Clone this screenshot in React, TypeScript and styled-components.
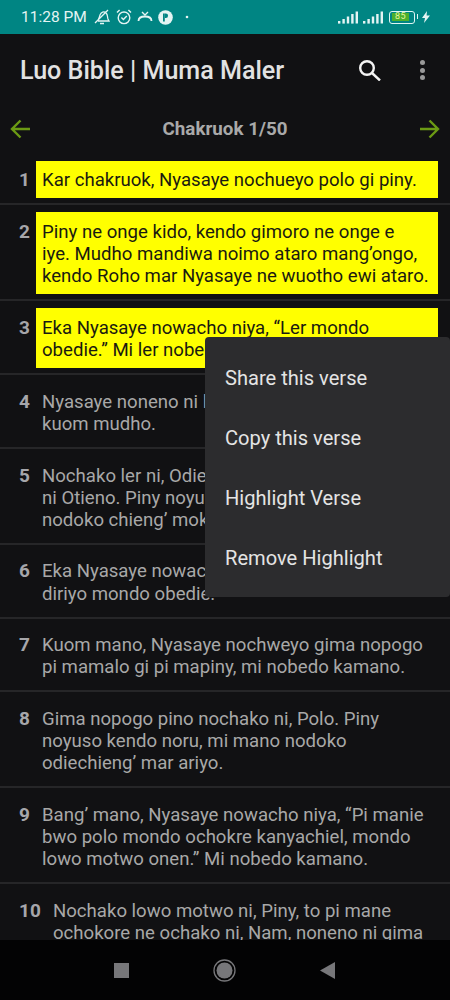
import React from "react";
import styled, { createGlobalStyle } from "styled-components";

const GlobalStyle = createGlobalStyle`
  html, body {
    margin: 0;
    padding: 0;
    background: #111113;
  }
`;

const Screen = styled.div`
  position: relative;
  width: 450px;
  height: 1000px;
  display: flex;
  flex-direction: column;
  overflow: hidden;
  background: #111113;
  font-family: Roboto, "Noto Sans", sans-serif;
`;

const StatusBar = styled.div`
  height: 34px;
  flex: none;
  display: flex;
  align-items: center;
  justify-content: space-between;
  padding: 0 20px 0 21px;
  background: #008583;
  color: #e4f4f3;
`;

const StatusGroup = styled.div<{ $gap: number }>`
  display: flex;
  align-items: center;
  gap: ${(p) => p.$gap}px;
`;

const Clock = styled.span`
  font-size: 15.5px;
  margin-right: 1px;
`;

const Battery = styled.div`
  position: relative;
  width: 26px;
  height: 13px;
  box-sizing: border-box;
  border: 1.5px solid #dff5f3;
  border-radius: 3px;
  padding: 1.5px;
  display: flex;
  margin: 0 3px 0 1px;
  &::after {
    content: "";
    position: absolute;
    right: -4px;
    top: 2.5px;
    width: 1.5px;
    height: 5px;
    background: #dff5f3;
  }
`;

const BatteryFill = styled.div`
  width: 85%;
  background: #4caf2c;
  color: #e6f7a0;
  font-size: 9px;
  line-height: 7px;
  text-align: center;
  letter-spacing: 0.4px;
`;

const Toolbar = styled.div`
  height: 72px;
  flex: none;
  display: flex;
  align-items: center;
  gap: 14px;
  padding: 0 4px 0 20px;
`;

const Title = styled.h1`
  flex: 1;
  margin: 0;
  font-size: 25.1px;
  font-weight: 500;
  color: #e2e2e2;
`;

const ToolbarAction = styled.div<{ $width: number }>`
  width: ${(p) => p.$width}px;
  display: flex;
  align-items: center;
  justify-content: center;
  color: #f4f4f4;
`;

const Dots = styled.div`
  display: flex;
  flex-direction: column;
  gap: 2.5px;
  & > span {
    width: 5px;
    height: 5px;
    border-radius: 50%;
    background: #999999;
  }
`;

const ChapterNav = styled.div`
  height: 46px;
  flex: none;
  display: flex;
  align-items: center;
  justify-content: space-between;
  padding: 0 10px;
`;

const ChapterLabel = styled.span`
  font-size: 18.8px;
  font-weight: 700;
  color: #a9a9a9;
`;

const VerseList = styled.div`
  flex: 1;
  min-height: 0;
  overflow: hidden;
  padding-top: 8.7px;
`;

const VerseRow = styled.div`
  display: flex;
  align-items: flex-start;
  margin-right: 12px;
  padding-bottom: 7px;
  margin-bottom: 7px;
  position: relative;
  &::after {
    content: "";
    position: absolute;
    left: 0;
    right: -12px;
    bottom: 0;
    height: 2px;
    background: #262628;
  }
`;

const VerseNumber = styled.span<{ $wide?: boolean }>`
  flex: none;
  box-sizing: border-box;
  width: ${(p) => (p.$wide ? 47 : 36)}px;
  padding: 8.7px 0 0 19px;
  font-size: 19px;
  line-height: 22.2px;
  font-weight: 700;
  color: #a6a6aa;
`;

const VerseText = styled.div<{ $marked?: boolean }>`
  flex: 1;
  min-width: 0;
  padding: 8.7px 6px 6.7px;
  font-size: 18.6px;
  line-height: 22.2px;
  white-space: pre-line;
  background: ${(p) => (p.$marked ? "#ffff00" : "transparent")};
  color: ${(p) => (p.$marked ? "#1a1a10" : "#a8a8a8")};
`;

const Menu = styled.div`
  position: absolute;
  left: 205px;
  top: 337px;
  width: 245px;
  padding: 10px 0;
  background: #2c2c2e;
  border-radius: 4px;
`;

const MenuItem = styled.div`
  height: 60px;
  box-sizing: border-box;
  display: flex;
  align-items: center;
  padding: 1px 0 0 20px;
  font-size: 20.1px;
  color: #e4e4e4;
`;

const NavBar = styled.div`
  height: 60px;
  flex: none;
  display: flex;
  align-items: center;
  justify-content: center;
  gap: 84px;
  padding-right: 2px;
  background: #030304;
`;

const NavSquare = styled.div`
  width: 15px;
  height: 15px;
  background: #77777a;
`;

const verses = [
  { n: 1, marked: true, text: "Kar chakruok, Nyasaye nochueyo polo gi piny." },
  { n: 2, marked: true, text: "Piny ne onge kido, kendo gimoro ne onge e\niye. Mudho mandiwa noimo ataro mang’ongo, kendo Roho mar Nyasaye ne wuotho ewi ataro." },
  { n: 3, marked: true, text: "Eka Nyasaye nowacho niya, “Ler mondo obedie.” Mi ler nobedo kamano." },
  { n: 4, text: "Nyasaye noneno ni ler ber, kendo nopogo ler kuom mudho." },
  { n: 5, text: "Nochako ler ni, Odiechieng’, to mudho nochako ni Otieno. Piny noyuso kendo noru, mi mano nodoko chieng’ mokwongo." },
  { n: 6, text: "Eka Nyasaye nowacho niya, “Kor polo mondo diriyo mondo obedie.”" },
  { n: 7, text: "Kuom mano, Nyasaye nochweyo gima nopogo pi mamalo gi pi mapiny, mi nobedo kamano." },
  { n: 8, text: "Gima nopogo pino nochako ni, Polo. Piny noyuso kendo noru, mi mano nodoko odiechieng’ mar ariyo." },
  { n: 9, text: "Bang’ mano, Nyasaye nowacho niya, “Pi manie bwo polo mondo ochokre kanyachiel, mondo lowo motwo onen.” Mi nobedo kamano." },
  { n: 10, text: "Nochako lowo motwo ni, Piny, to pi mane ochokore ne ochako ni, Nam, noneno ni gima ber." },
];

const menuItems = ["Share this verse", "Copy this verse", "Highlight Verse", "Remove Highlight"];

function Signal() {
  return (
    <svg width="21" height="13" viewBox="0 0 21 13" fill="#e4f4f3">
      <rect x="0" y="10" width="2.4" height="2.6" />
      <rect x="4.4" y="8" width="2.4" height="4.6" />
      <rect x="8.8" y="5.5" width="2.4" height="7" />
      <rect x="13.2" y="3" width="2.4" height="9.6" />
      <rect x="17.6" y="0.5" width="2.4" height="12" />
    </svg>
  );
}

function Arrow({ flip }: { flip?: boolean }) {
  return (
    <svg
      width="20"
      height="20"
      viewBox="0 0 20 20"
      fill="none"
      stroke="#6b9a14"
      strokeWidth="2.4"
      style={flip ? { transform: "scaleX(-1)" } : undefined}
    >
      <path d="M20 10H2M10.5 1.5 2 10l8.5 8.5" />
    </svg>
  );
}

export default function App() {
  return (
    <Screen>
      <GlobalStyle />
      <StatusBar>
        <StatusGroup $gap={5}>
          <Clock>11:28 PM</Clock>
          <svg width="18" height="16" viewBox="0 0 18 16" fill="none" stroke="#e4f4f3" strokeWidth="1.3">
            <path d="M4 12c2-1 2-3 3-6s4-4 6-2 1 3 2 6l1 2H5M2 14 15 1M7 14.5h4" />
          </svg>
          <svg width="16" height="16" viewBox="0 0 16 16" fill="none" stroke="#e4f4f3" strokeWidth="1.4">
            <circle cx="8" cy="8.8" r="5.8" />
            <path d="M5.4 8.6 7.4 10.6 10.8 7M1 3.6 3.6 1M15 3.6 12.4 1" />
          </svg>
          <svg width="16" height="12" viewBox="0 0 16 12" fill="none" stroke="#e4f4f3" strokeWidth="1.8">
            <path d="M1.5 10c0-3 3-4.5 6.5-4.5s6.5 1.5 6.5 4.5" />
            <path d="M5 1 8 4l3-3" strokeWidth="1.4" />
          </svg>
          <svg width="15" height="15" viewBox="0 0 15 15">
            <circle cx="7.5" cy="7.5" r="7.3" fill="#e4f4f3" />
            <path d="M5 3.5h1.800v8H5z" fill="#008583" />
            <path d="M6.800 3.5h1a2.200 2.200 0 0 1 0 4.500h-1z" fill="#008583" />
          </svg>
          <svg width="22" height="4" viewBox="0 0 22 4" fill="#e4f4f3">
            <circle cx="9" cy="2" r="1.3" />
          </svg>
        </StatusGroup>
        <StatusGroup $gap={4}>
          <Signal />
          <Signal />
          <Battery>
            <BatteryFill>85</BatteryFill>
          </Battery>
          <svg width="8" height="12" viewBox="0 0 8 12" fill="#e4f4f3">
            <path d="M5 0 0 7h3l-1 5 6-7.5H4.600z" />
          </svg>
        </StatusGroup>
      </StatusBar>
      <Toolbar>
        <Title>Luo Bible | Muma Maler</Title>
        <ToolbarAction $width={28}>
          <svg width="22" height="21" viewBox="0 0 22 21" fill="none" stroke="currentColor" strokeWidth="2.4">
            <circle cx="8" cy="8" r="6.8" />
            <path d="M13 13l8 7.500" />
          </svg>
        </ToolbarAction>
        <ToolbarAction $width={48}>
          <Dots>
            <span />
            <span />
            <span />
          </Dots>
        </ToolbarAction>
      </Toolbar>
      <ChapterNav>
        <Arrow />
        <ChapterLabel>Chakruok 1/50</ChapterLabel>
        <Arrow flip />
      </ChapterNav>
      <VerseList>
        {verses.map((verse) => (
          <VerseRow key={verse.n}>
            <VerseNumber $wide={verse.n > 9}>{verse.n}</VerseNumber>
            <VerseText $marked={verse.marked}>{verse.text}</VerseText>
          </VerseRow>
        ))}
      </VerseList>
      <Menu>
        {menuItems.map((label) => (
          <MenuItem key={label}>{label}</MenuItem>
        ))}
      </Menu>
      <NavBar>
        <NavSquare />
        <svg width="23" height="23" viewBox="0 0 23 23">
          <circle cx="11.5" cy="11.5" r="10.5" fill="none" stroke="#77777a" strokeWidth="1.3" />
          <circle cx="11.5" cy="11.5" r="8" fill="#77777a" />
        </svg>
        <svg width="15" height="17" viewBox="0 0 15 17" fill="#77777a">
          <path d="M15 0v17L0 8.500z" />
        </svg>
      </NavBar>
    </Screen>
  );
}
